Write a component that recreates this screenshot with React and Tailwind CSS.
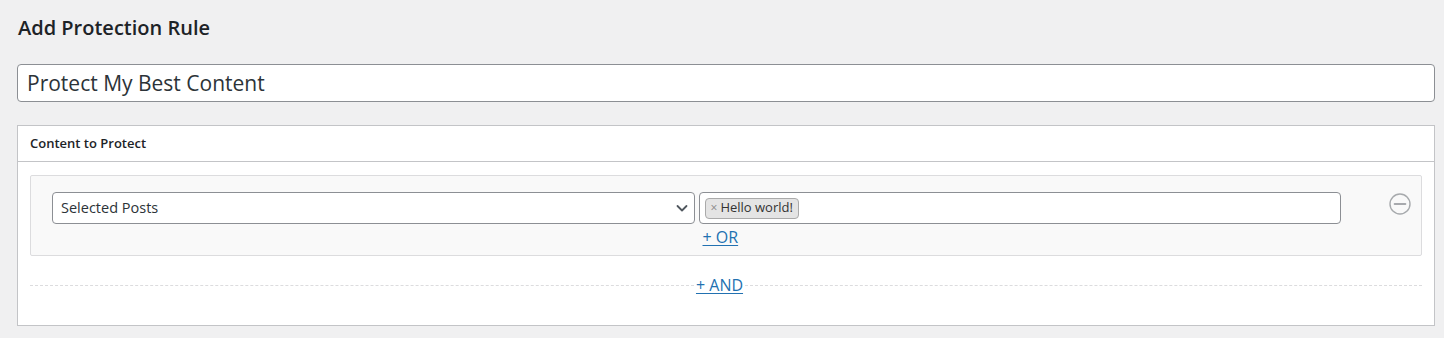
import React from "react";

// ── Icons ──────────────────────────────────────────────────────────────────
const Chevron = () => (
  <svg width="14" height="14" viewBox="0 0 14 14" fill="none">
    <path d="M2.5 5l4.5 4.5L11.5 5" stroke="#50575e" strokeWidth="1.8" strokeLinecap="round" strokeLinejoin="round" />
  </svg>
);

const MinusCircle = () => (
  <svg width="22" height="22" viewBox="0 0 22 22" fill="none">
    <circle cx="11" cy="11" r="10" stroke="#a7aaad" strokeWidth="1.4" />
    <path d="M5.5 11h11" stroke="#8c8f94" strokeWidth="1.6" strokeLinecap="round" />
  </svg>
);

export default function App() {
  return (
    <div
      className="h-[338px] bg-[#f0f0f1] pl-[17px] pr-[9px] pt-[14px] text-[#1d2327]"
      style={{ fontFamily: '"Open Sans", "Noto Sans", sans-serif' }}
    >
      {/* Heading */}
      <h1 className="pl-[1px] text-[20px] font-semibold leading-[28px] text-[#1d2327]">Add Protection Rule</h1>

      {/* Title input */}
      <div className="mt-[22px] flex h-[38px] items-center rounded-[4px] border border-[#8c8f94] bg-white px-[9px]">
        <span className="text-[21px] leading-none text-[#2c3338]">Protect My Best Content</span>
      </div>

      {/* Panel */}
      <div className="mt-[23px] border border-[#c3c4c7] bg-white">
        <div className="flex h-[36px] items-center border-b border-[#c3c4c7] pl-[12px]">
          <span className="text-[13px] font-semibold text-[#1d2327]">Content to Protect</span>
        </div>

        <div className="px-[12px] pt-[13px] pb-[30px]">
          {/* Rule group */}
          <div className="flex rounded-[2px] border border-[#dcdcde] bg-[#f9f9f9] pl-[21px] pt-[16px] pb-[8px]">
            <div className="grid flex-1 grid-cols-2 gap-x-[4px]">
              <div className="flex h-[32px] items-center justify-between rounded-[4px] border border-[#8c8f94] bg-white pl-[8px] pr-[5px]">
                <span className="text-[14.5px] text-[#2c3338]">Selected Posts</span>
                <Chevron />
              </div>
              <div className="flex h-[32px] items-center rounded-[4px] border border-[#8c8f94] bg-white pl-[5px]">
                <span className="flex h-[21px] items-center gap-[3px] rounded-[4px] border border-[#aaaaaa] bg-[#e4e4e4] px-[5px] text-[13px] text-[#333]">
                  <span className="text-[12px] text-[#888]">×</span>
                  Hello world!
                </span>
              </div>
              <div />
              <div className="pl-[4px] pt-[3px] text-[16px] leading-[20px]">
                <a className="text-[#2271b1] underline underline-offset-2">+ OR</a>
              </div>
            </div>
            <div className="flex w-[80px] justify-end pr-[10px] pt-[1px]">
              <MinusCircle />
            </div>
          </div>

          {/* AND divider */}
          <div className="mt-[19px] flex h-[20px] items-center text-[16px] leading-[20px]">
            <div className="grow basis-0 border-t border-dashed border-[#dcdcde]" />
            <a className="px-[2px] text-[#2271b1] underline underline-offset-2">+ AND</a>
            <div className="grow basis-[13px] border-t border-dashed border-[#dcdcde]" />
          </div>
        </div>
      </div>
    </div>
  );
}
